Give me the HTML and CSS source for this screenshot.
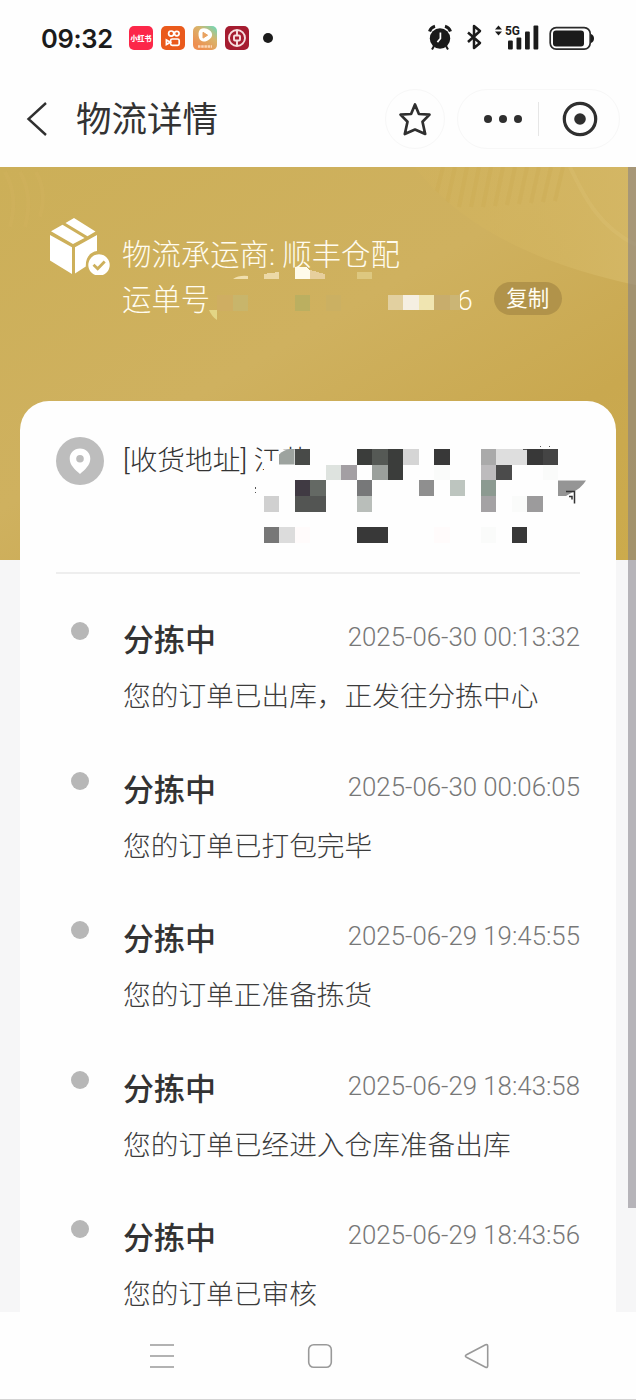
FILE: index.html
```html
<!DOCTYPE html>
<html lang="zh-CN">
<head>
  <meta charset="UTF-8">
  <meta name="viewport" content="width=device-width, initial-scale=1">
  <title>物流详情</title>
  <link rel="stylesheet" href="styles.css">
</head>
<body>

<div class="status-bar">
  <span class="clock">09:32</span>
  <div class="apps">
    <span class="app app-red">小红书</span>
    <svg class="app" viewBox="0 0 24 24">
      <rect width="24" height="24" rx="5" fill="#ea5a1c"/>
      <g fill="none" stroke="#fff" stroke-width="1.7">
        <circle cx="10.2" cy="7.6" r="2.6"/><circle cx="15.8" cy="7.6" r="2.3"/>
        <rect x="9.6" y="13" width="8.6" height="6.4" rx="1.6"/>
        <path d="M9.4 16.2 5.4 14v4.6z"/>
      </g>
    </svg>
    <svg class="app" viewBox="0 0 24 24">
      <defs>
        <linearGradient id="video" x1="1" y1="0" x2="0.3" y2="0.9">
          <stop offset="0" stop-color="#62dcc0"/><stop offset="0.45" stop-color="#d9b46b"/><stop offset="1" stop-color="#ee8f50"/>
        </linearGradient>
      </defs>
      <rect width="24" height="24" rx="5" fill="url(#video)"/>
      <path d="M7 3.500c3-2 7-1.300 9.500.8 3.700 2.700 3.300 6.500 0 9-4 3.400-9.200 3-10.400-1.200-.9-3-.9-6.800.9-8.600z" fill="#fff"/>
      <path d="M10 6.300l4.600 2.900-4.600 2.900z" fill="#e9a260" stroke="#e9a260" stroke-linejoin="round"/>
      <path d="M5 20.500h14" stroke="#fbd7b8" stroke-width="2.500" stroke-dasharray="2.500 .7"/>
    </svg>
    <svg class="app" viewBox="0 0 24 24">
      <rect width="24" height="24" rx="5" fill="#a51c30"/>
      <g fill="none" stroke="#f7dfe0" stroke-width="1.900">
        <circle cx="12" cy="12" r="8"/>
        <rect x="9" y="9.500" width="6" height="5" rx="1"/>
        <path d="M12 4v5.500M12 14.500V20"/>
      </g>
    </svg>
  </div>
  <span class="dot"></span>
  <svg class="signals" viewBox="0 0 170 30" fill="#1b1b1b">
    <circle cx="14" cy="15.500" r="10.200"/>
    <path d="M3.500 8.500A8 8 0 0 1 9 3.300M19 3.300a8 8 0 0 1 5.500 5.200" fill="none" stroke="#1b1b1b" stroke-width="3"/>
    <path d="M8 23l-2 3.500M20 23l2 3.500" stroke="#1b1b1b" stroke-width="2"/>
    <path d="M14.400 9.500v6l-3 3.600" fill="none" stroke="#fff" stroke-width="1.700"/>
    <path d="M42 9.500l12 10.500-6 5V3l6 5-12 11" fill="none" stroke="#1b1b1b" stroke-width="2.500" stroke-linejoin="round"/>
    <path d="M69 6.500l3.500-4 3.500 4zM69 8.500l3.500 4 3.500-4z"/>
    <text class="network" x="79" y="11.500" textLength="15" lengthAdjust="spacingAndGlyphs">5G</text>
    <rect x="82" y="17.500" width="4.800" height="9" rx="1"/>
    <rect x="90.500" y="14.500" width="4.800" height="12" rx="1"/>
    <rect x="99" y="8.500" width="4.800" height="18" rx="1"/>
    <rect x="107.500" y="2.500" width="4.800" height="24" rx="1"/>
    <rect x="124.200" y="4.600" width="40" height="21.500" rx="6" fill="none" stroke="#2a2a2a" stroke-width="1.700"/>
    <rect x="127" y="7.400" width="31" height="16" rx="3"/>
    <path d="M165 11c4 1 4 8 0 9z"/>
  </svg>
</div>

<header class="title-bar">
  <svg class="back" viewBox="0 0 22 36"><path d="M20 2 2.500 18 20 34" fill="none" stroke="#303030" stroke-width="2.400"/></svg>
  <h1>物流详情</h1>
  <button class="favorite" aria-label="收藏">
    <svg viewBox="0 0 34 34"><path d="M17 2.500 20.900 12 31.500 12.600 24.500 19.800 27.200 32 17 27.500 6.800 32 9.500 19.800 2.500 12.600 13.100 12z" fill="none" stroke="#2f2f2f" stroke-width="2.700" stroke-linejoin="round"/></svg>
  </button>
  <div class="capsule">
    <svg class="more" viewBox="0 0 40 10" fill="#2f2f2f"><circle cx="5" cy="5" r="4"/><circle cx="20" cy="5" r="4"/><circle cx="35" cy="5" r="4"/></svg>
    <span class="separator"></span>
    <svg class="close" viewBox="0 0 36 36"><circle cx="18" cy="18" r="15.700" fill="none" stroke="#2f2f2f" stroke-width="3.200"/><circle cx="18" cy="18" r="5.800" fill="#2f2f2f"/></svg>
  </div>
</header>

<main class="page">
  <section class="carrier">
    <svg class="pattern" viewBox="0 0 636 393">
      <defs>
        <clipPath id="wave"><path d="M415 0C455 54 530 96 636 118V0z"/></clipPath>
        <linearGradient id="shine" x1="0" y1="0" x2="1" y2="0">
          <stop offset="0" stop-color="#d3b45c" stop-opacity=".3"/><stop offset="1" stop-color="#d4b765" stop-opacity=".95"/>
        </linearGradient>
      </defs>
      <path d="M415 0C455 54 530 96 636 118V0z" fill="url(#shine)"/>
      <g clip-path="url(#wave)" fill="none" stroke="#c9a850" stroke-opacity=".3" stroke-width="4">
        <path d="M443 0l-8 32M455 0l-8 36M467 0l-8 40M479 0l-8 40M491 0l-8 40M503 0l-8 39M515 0l-8 38M527 0l-8 37M539 0l-8 36M551 0l-8 35M563 0l-8 34"/>
        <path d="M570 0c15 32 30 60 66 78" stroke="#dfc577"/>
      </g>
      <path d="M5 5c10 18 10 35 5 55M20 5c10 18 10 35 5 55M36 5c9 17 8 30 4 45" fill="none" stroke="#d6b966" stroke-opacity=".18" stroke-width="4"/>
    </svg>
    <svg class="parcel" viewBox="0 0 62 58" fill="#fff">
      <path d="M16.500 6 25 1l21.500 13.500-8 4.700zM2 14.300l11.500-6.600 22 13.200L24 27.100z"/>
      <path d="M1 18l22 12.300V57L1 43.500zM26 30.300 48 18v16c-7 1-11.500 6.500-11.200 15.500L26 56.500z"/>
      <circle cx="50" cy="48" r="10.700"/>
      <path d="M44.500 47.800l4.200 4 7-7.300" fill="none" stroke="#cdb05c" stroke-width="2.800"/>
    </svg>
    <div class="carrier-info">
      <p>物流承运商: 顺丰仓配</p>
      <div class="waybill">
        <span>运单号</span>
        <span class="waybill-end">6</span>
        <button class="copy">复制</button>
        <svg class="mask" viewBox="208 265 262 58" shape-rendering="crispEdges">
          <path d="M233 279q6-4 15-3v3z" fill="#f0dfad" shape-rendering="auto"/>
          <path d="M263.500 274l15.500-2v7h-15.500z" fill="#ecd9a6"/>
          <path d="M294.500 267h12l3.500 3v9h-15.500z" fill="#fffbea"/>
          <path d="M310 270l15 4v5h-15z" fill="#e7cf9d"/>
          <path d="M356.500 272H372v7h-15.500z" fill="#ddc880"/>
          <path d="M217 295h15.500v15.500H217z" fill="#cfae62"/>
          <path d="M232.500 295H248v15.500h-15.500z" fill="#c8b56b"/>
          <path d="M294.500 295H310v15.500h-15.500z" fill="#bbaf60"/>
          <path d="M325.500 295H341v15.500h-15.500z" fill="#cbb062"/>
          <path d="M387.500 294.500H403V310h-15.500z" fill="#e2d0a0"/>
          <path d="M403 294.500h15.500V310H403z" fill="#f5efe2"/>
          <path d="M418.500 294.500H434V310h-15.500z" fill="#f0e5b1"/>
          <path d="M434 294.500h15.500V310H434z" fill="#c8ad6c"/>
          <path d="M449.500 294.500H460V310h-10.500z" fill="#cbb575"/>
          <path d="M209 310h8v10q-5-3-8-10z" fill="#e3d585" shape-rendering="auto"/>
        </svg>
      </div>
    </div>
  </section>

  <section class="card">
    <div class="address">
      <svg class="pin" viewBox="0 0 48 48">
        <circle cx="24" cy="24" r="24" fill="#bdbdbd"/>
        <path d="M24 11.500c-6 0-10.300 4.400-10.300 10.200C13.700 28 19 32.500 24 37c5-4.500 10.300-9 10.300-15.300 0-5.800-4.300-10.200-10.300-10.200z" fill="#fff"/>
        <circle cx="24" cy="21.800" r="3.800" fill="#bdbdbd"/>
      </svg>
      <p>[收货地址] 江苏</p>
      <svg class="mask" viewBox="250 440 340 110" shape-rendering="crispEdges">
        <path d="M281 449.500H588V548H256V476l8-6 1-9h14z" fill="#fefefe"/>
        <path d="M279 464.500v-10q5-5 11-5.500h4.500v15.500z" fill="#9da39f" shape-rendering="auto"/>
        <path d="M294.500 449H310v15.500h-15.500z" fill="#484a48"/>
        <path d="M356.500 449H372v15.500h-15.500zM387.500 449H403v31h-15.500z" fill="#3b3d3b"/>
        <path d="M372 449h15.500v15.500H372z" fill="#555955"/>
        <path d="M403 449h15.500v15.500H403z" fill="#d5d5d5"/>
        <path d="M434 449h15.500v15.500H434zM527 449h15.500v15.500H527zM511.500 527H527v15.500h-15.500zM356.500 527h31v15.500h-31z" fill="#383838"/>
        <path d="M542.500 449H558v15.500h-15.500z" fill="#444"/>
        <path d="M480.500 449H496v15.500h-15.500z" fill="#aaa"/>
        <path d="M496 449h31v15.500h-31z" fill="#dedede"/>
        <path d="M325.500 464.500H341V480h-15.500z" fill="#dee3df"/>
        <path d="M341 464.500h15.500V480H341z" fill="#a39fa3"/>
        <path d="M372 464.500h15.500V480H372z" fill="#9ba09c"/>
        <path d="M480.500 464.500H496V480h-15.500z" fill="#bdbbbd"/>
        <path d="M496 464.500h15.500V480H496z" fill="#4b4b4b"/>
        <path d="M294.500 480H310v16h-15.500z" fill="#403a43"/>
        <path d="M310 480h15.500v16H310z" fill="#646964"/>
        <path d="M294.500 496h31v15.500h-31z" fill="#535553"/>
        <path d="M356.500 480H372v16h-15.500z" fill="#777879"/>
        <path d="M418.500 480H434v16h-15.500z" fill="#8f8f8f"/>
        <path d="M449.500 480H465v16h-15.500z" fill="#bdc5bf"/>
        <path d="M480.500 480H496v16h-15.500z" fill="#8c9a91"/>
        <path d="M480.500 496H496v15.500h-15.500z" fill="#a4a2a4"/>
        <path d="M263.500 496H279v15.500h-15.500z" fill="#d0d0d0"/>
        <path d="M356.500 496H372v15.500h-15.500z" fill="#b9beba"/>
        <path d="M527 496h15.500v15.500H527z" fill="#9c9b9c"/>
        <path d="M263.500 527H279v15.500h-15.500z" fill="#777"/>
        <path d="M279 527h15.500v15.500H279z" fill="#dcdcdc"/>
        <path d="M511.500 496H527v15.500h-15.500zM434 464.500h15.500V480H434zM542.500 464.500H558V480h-15.500zM480.500 527H496v15.500h-15.500z" fill="#fafbfa"/>
        <path d="M294.500 527H310v15.500h-15.500zM434 527h15.500v15.500H434z" fill="#fffbfb"/>
        <path d="M558 480.500h28q-5 8-14 12l-6 3.500h-8z" fill="#959595" shape-rendering="auto"/>
        <path d="M566 491.500h8.500v12M569 496.500h3v3" fill="none" stroke="#333" stroke-width="1.500" shape-rendering="auto"/>
        <path d="M255.500 487v2M255.500 491.500v1.500M523 449.500h4M539.500 446.500h1.500M548.500 446.500h1.500" stroke="#555" stroke-width="1.300"/>
      </svg>
    </div>

    <ul class="timeline">
      <li>
        <div class="row"><h2>分拣中</h2><time>2025-06-30 00:13:32</time></div>
        <p>您的订单已出库，正发往分拣中心</p>
      </li>
      <li>
        <div class="row"><h2>分拣中</h2><time>2025-06-30 00:06:05</time></div>
        <p>您的订单已打包完毕</p>
      </li>
      <li>
        <div class="row"><h2>分拣中</h2><time>2025-06-29 19:45:55</time></div>
        <p>您的订单正准备拣货</p>
      </li>
      <li>
        <div class="row"><h2>分拣中</h2><time>2025-06-29 18:43:58</time></div>
        <p>您的订单已经进入仓库准备出库</p>
      </li>
      <li>
        <div class="row"><h2>分拣中</h2><time>2025-06-29 18:43:56</time></div>
        <p>您的订单已审核</p>
      </li>
    </ul>
  </section>
  <div class="scrollbar"></div>
</main>

<nav class="system-nav">
  <svg viewBox="0 0 28 28"><path d="M2 3h24M2 14h24M2 25h24"/></svg>
  <svg viewBox="0 0 28 28"><rect x="2.700" y="2.700" width="22.600" height="22.600" rx="5"/></svg>
  <svg viewBox="0 0 28 28"><path d="M22.500 2.800q2.200-.8 2.200 1.500v19.400q0 2.300-2.200 1.500L3.500 15.300q-2.200-1.300 0-2.600z"/></svg>
</nav>

</body>
</html>
```
FILE: styles.css
```css
* {
  box-sizing: border-box;
}

body {
  margin: 0;
  width: 636px;
  height: 1400px;
  display: flex;
  flex-direction: column;
  overflow: hidden;
  background: #fefefe;
  color: #333;
  font-family: Roboto, "Noto Sans CJK SC", sans-serif;
}

h1, h2, p, ul {
  margin: 0;
  padding: 0;
  white-space: nowrap;
}

button {
  border: 0;
  padding: 0;
  font-family: inherit;
}

svg {
  display: block;
  flex: none;
}

/* status bar */
.status-bar {
  height: 76px;
  flex: none;
  display: flex;
  align-items: center;
  padding: 0 41px;
}

.clock {
  width: 88px;
  flex: none;
  font-family: Inter, sans-serif;
  font-size: 25.500px;
  font-weight: 600;
  letter-spacing: -0.3px;
  color: #1b1b1b;
}

.apps {
  display: flex;
  gap: 8px;
}

.app {
  width: 24px;
  height: 24px;
  flex: none;
}

.app-red {
  display: flex;
  align-items: center;
  justify-content: center;
  border-radius: 5px;
  background: #fc2749;
  color: #fff;
  font-size: 7px;
  font-weight: 900;
  white-space: nowrap;
}

.dot {
  width: 10px;
  height: 10px;
  flex: none;
  margin-left: 14px;
  border-radius: 50%;
  background: #1b1b1b;
}

.signals {
  width: 170px;
  height: 30px;
  margin-left: 153px;
}

.network {
  font-family: Roboto, sans-serif;
  font-size: 13.5px;
  font-weight: 700;
}

/* title bar */
.title-bar {
  height: 91px;
  flex: none;
  display: flex;
  align-items: center;
  padding: 0 16px 6px 26px;
}

.back {
  width: 22px;
  height: 36px;
}

.title-bar h1 {
  margin-left: 28px;
  padding-top: 2px;
  font-size: 35.500px;
  font-weight: 400;
  line-height: 50px;
}

.favorite {
  width: 60px;
  height: 60px;
  margin-left: auto;
  display: flex;
  align-items: center;
  justify-content: center;
  background: #fefefe;
  border: 1px solid #f7f7f7;
  border-radius: 50%;
}

.favorite svg {
  width: 34px;
  height: 34px;
}

.capsule {
  width: 163px;
  height: 60px;
  margin-left: 12px;
  padding: 0 21px 0 25px;
  display: flex;
  align-items: center;
  justify-content: space-between;
  border: 1px solid #f7f7f7;
  border-radius: 30px;
}

.more {
  width: 40px;
  height: 10px;
}

.separator {
  width: 1px;
  height: 34px;
  margin-right: 8px;
  background: #e6e6e6;
}

.close {
  width: 36px;
  height: 36px;
}

/* page */
.page {
  position: relative;
  height: 1145px;
  flex: none;
  overflow: hidden;
  background: #f6f6f7;
}

.carrier {
  position: relative;
  height: 393px;
  padding: 50px 0 0 49px;
  display: flex;
  align-items: flex-start;
  gap: 11px;
  background: linear-gradient(150deg, #ccaf58, #cfb15f 45%, #c9a84f 75%, #ccab4c);
}

.pattern {
  position: absolute;
  top: 0;
  left: 0;
  width: 636px;
  height: 393px;
}

.parcel {
  position: relative;
  width: 62px;
  height: 58px;
}

.carrier-info {
  position: relative;
  padding-top: 16px;
  color: #fffcf0;
  font-size: 29.400px;
  font-weight: 300;
  line-height: 45px;
}

.waybill {
  position: relative;
  display: flex;
  align-items: center;
  height: 45px;
}

.waybill .mask {
  position: absolute;
  left: 86px;
  top: -13px;
  width: 262px;
  height: 58px;
}

.waybill-end {
  margin-left: 247px;
  font-size: 28px;
}

.copy {
  width: 68px;
  height: 33px;
  margin: -4px 0 0 21px;
  border-radius: 17px;
  background: #b1934a;
  color: #fffdf3;
  font-size: 21.500px;
  line-height: 31px;
}

.card {
  position: relative;
  height: 930px;
  margin: -159px 20px 0;
  padding: 0 36px;
  border-radius: 29px 29px 0 0;
  background: #fefefe;
}

.address {
  position: relative;
  height: 173px;
  padding-top: 36px;
  display: flex;
  gap: 19px;
  border-bottom: 2px solid #eee;
}

.pin {
  width: 48px;
  height: 48px;
}

.address p {
  padding-top: 2px;
  font-size: 27.700px;
  font-weight: 300;
  line-height: 44px;
}

.address .mask {
  position: absolute;
  left: 194px;
  top: 39px;
  width: 340px;
  height: 110px;
}

/* timeline */
.timeline {
  padding-top: 42px;
  list-style: none;
}

.timeline li {
  position: relative;
  height: 149.600px;
  padding: 2px 0 0 67px;
}

.timeline li::before {
  content: "";
  position: absolute;
  left: 15px;
  top: 6px;
  width: 18px;
  height: 18px;
  border-radius: 50%;
  background: #b7b7b7;
}

.row {
  display: flex;
  justify-content: space-between;
  height: 57px;
}

.timeline h2 {
  font-size: 31px;
  font-weight: 500;
  line-height: 46px;
}

.timeline time {
  color: #777;
  font-size: 25.800px;
  font-weight: 300;
  line-height: 38px;
  white-space: nowrap;
}

.timeline p {
  color: #3c3c3c;
  font-size: 27.700px;
  font-weight: 300;
  line-height: 44px;
}

.scrollbar {
  position: absolute;
  top: 0;
  right: 0;
  width: 8px;
  height: 1041px;
  background: rgba(130, 125, 135, 0.55);
}

/* android navigation */
.system-nav {
  height: 88px;
  flex: none;
  display: flex;
  justify-content: space-between;
  padding: 30px 145px 0 148px;
  border-bottom: 1px solid #d4d4d4;
}

.system-nav svg {
  width: 28px;
  height: 28px;
  fill: none;
  stroke: #999;
  stroke-width: 1.600;
}
```
